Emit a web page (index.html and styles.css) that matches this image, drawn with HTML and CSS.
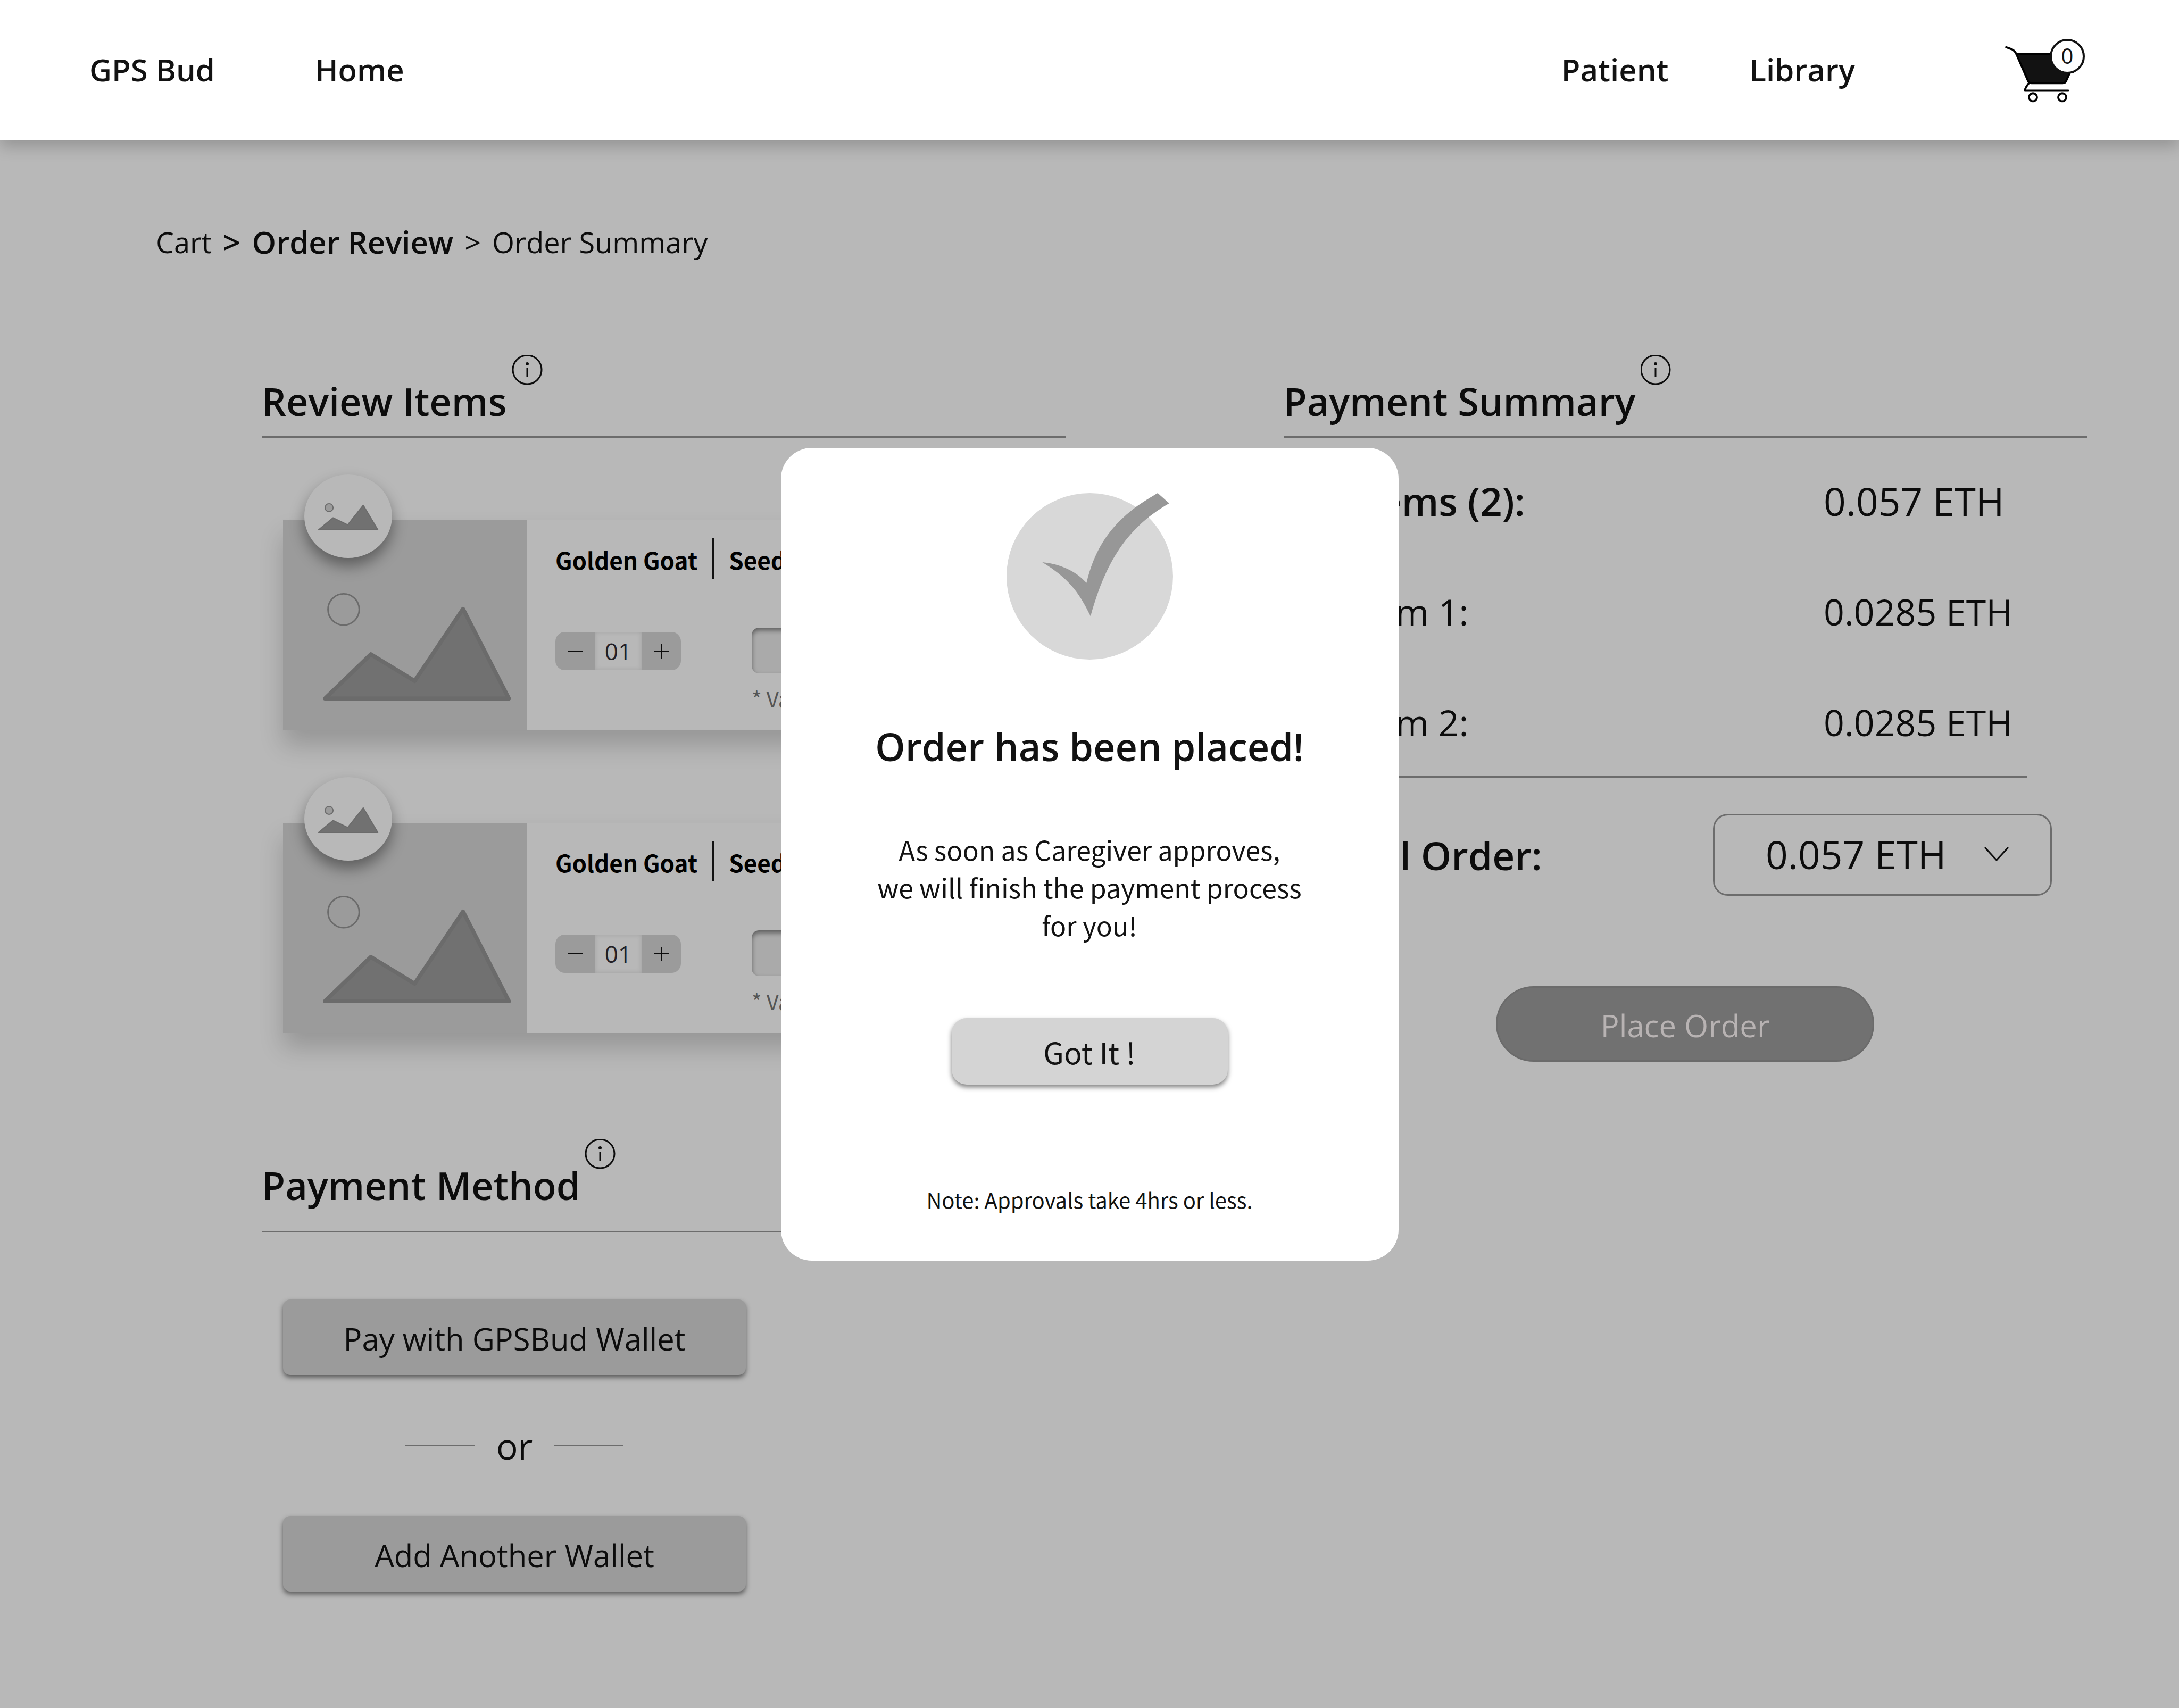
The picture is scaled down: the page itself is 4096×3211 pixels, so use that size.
FILE: index.html
```html
<!DOCTYPE html>
<html lang="en">
<head>
<meta charset="utf-8">
<title>GPS Bud – Order Review</title>
<meta name="viewport" content="width=device-width, initial-scale=1">
<link rel="stylesheet" href="styles.css">
</head>
<body>
<header class="site-header">
  <nav class="nav nav-left" aria-label="Main">
    <a href="#">GPS Bud</a>
    <a href="#">Home</a>
  </nav>
  <nav class="nav nav-right" aria-label="Account">
    <a href="#">Patient</a>
    <a href="#">Library</a>
  </nav>
  <a class="cart" href="#" aria-label="Cart">
    <svg class="cart-icon" viewBox="0 0 240 180" fill="none" stroke="#000" stroke-width="4" stroke-linecap="round" stroke-linejoin="round" aria-hidden="true">
      <path d="M58 57H181L157 110Q155 115 150 115H88Q83 115 81 110Z" fill="#121212"/>
      <path d="M38 44L49 48Q54 50 58 57"/>
      <path d="M83 115C79 120 75 126 75 130H161"/>
      <circle cx="91" cy="143" r="8"/>
      <circle cx="149" cy="143" r="8"/>
    </svg>
    <span class="cart-count">0</span>
  </a>
</header>

<main class="page">
  <nav class="breadcrumb" aria-label="Breadcrumb">
    <a href="#">Cart</a>
    <span class="current">&gt;</span>
    <a href="#" class="current" aria-current="page">Order Review</a>
    <span>&gt;</span>
    <a href="#">Order Summary</a>
  </nav>

  <div class="columns">
    <div class="column">
      <section>
        <div class="section-head">
          <h2>Review Items</h2>
          <button class="info" type="button" aria-label="About review items"><svg viewBox="0 0 57 57" aria-hidden="true"><circle cx="28" cy="28" r="27"/><path d="M28 24V42"/><circle class="dot" cx="28" cy="17" r="3"/></svg></button>
        </div>
        <div class="items">
          <article class="item">
            <div class="photo">
              <svg class="photo-art" viewBox="561 1032 483 417" aria-hidden="true"><circle cx="681" cy="1209" r="31"/><path d="M644 1386L735 1298L822 1351L918 1208L1009 1386Z"/></svg>
              <div class="thumb"><svg class="thumb-art" viewBox="603 941 174 166" aria-hidden="true"><circle cx="652" cy="1007" r="8"/><path d="M631 1051L660 1027L689 1041L720 1002L749 1051Z"/></svg></div>
            </div>
            <div class="item-body">
              <div class="item-title"><h3>Golden Goat</h3><span class="divider"></span><span>Seeds</span></div>
              <div class="item-controls">
                <div class="stepper">
                  <button type="button" aria-label="Decrease quantity"><svg viewBox="0 0 27 27" aria-hidden="true"><path d="M0 13H27"/></svg></button>
                  <input type="text" value="01" aria-label="Quantity">
                  <button type="button" aria-label="Increase quantity"><svg viewBox="0 0 27 27" aria-hidden="true"><path d="M0 13H27M13 0V27"/></svg></button>
                </div>
                <div class="code"><input type="text" id="code-1"><label for="code-1">* Valid code</label></div>
              </div>
            </div>
          </article>
          <article class="item">
            <div class="photo">
              <svg class="photo-art" viewBox="561 1032 483 417" aria-hidden="true"><circle cx="681" cy="1209" r="31"/><path d="M644 1386L735 1298L822 1351L918 1208L1009 1386Z"/></svg>
              <div class="thumb"><svg class="thumb-art" viewBox="603 941 174 166" aria-hidden="true"><circle cx="652" cy="1007" r="8"/><path d="M631 1051L660 1027L689 1041L720 1002L749 1051Z"/></svg></div>
            </div>
            <div class="item-body">
              <div class="item-title"><h3>Golden Goat</h3><span class="divider"></span><span>Seeds</span></div>
              <div class="item-controls">
                <div class="stepper">
                  <button type="button" aria-label="Decrease quantity"><svg viewBox="0 0 27 27" aria-hidden="true"><path d="M0 13H27"/></svg></button>
                  <input type="text" value="01" aria-label="Quantity">
                  <button type="button" aria-label="Increase quantity"><svg viewBox="0 0 27 27" aria-hidden="true"><path d="M0 13H27M13 0V27"/></svg></button>
                </div>
                <div class="code"><input type="text" id="code-2"><label for="code-2">* Valid code</label></div>
              </div>
            </div>
          </article>
        </div>
      </section>

      <section class="method">
        <div class="section-head section-head-tall">
          <h2>Payment Method</h2>
          <button class="info" type="button" aria-label="About payment methods"><svg viewBox="0 0 57 57" aria-hidden="true"><circle cx="28" cy="28" r="27"/><path d="M28 24V42"/><circle class="dot" cx="28" cy="17" r="3"/></svg></button>
        </div>
        <div class="wallets">
          <button class="wallet" type="button">Pay with GPSBud Wallet</button>
          <div class="or"><span>or</span></div>
          <button class="wallet" type="button">Add Another Wallet</button>
        </div>
      </section>
    </div>

    <section class="column">
      <div class="section-head">
        <h2>Payment Summary</h2>
        <button class="info" type="button" aria-label="About the payment summary"><svg viewBox="0 0 57 57" aria-hidden="true"><circle cx="28" cy="28" r="27"/><path d="M28 24V42"/><circle class="dot" cx="28" cy="17" r="3"/></svg></button>
      </div>
      <dl class="amounts">
        <div class="amount amount-main"><dt>Items (2):</dt><dd>0.057 ETH</dd></div>
        <div class="amount"><dt>Item 1:</dt><dd>0.0285 ETH</dd></div>
        <div class="amount"><dt>Item 2:</dt><dd>0.0285 ETH</dd></div>
      </dl>
      <div class="total">
        <label for="total">Total Order:</label>
        <div class="select">
          <select id="total"><option>0.057 ETH</option></select>
          <svg viewBox="0 0 46 27" aria-hidden="true"><path d="M1 1L23 25L45 1"/></svg>
        </div>
      </div>
      <button class="place-order" type="button">Place Order</button>
    </section>
  </div>
</main>

<div class="overlay">
  <div class="modal" role="dialog" aria-modal="true" aria-labelledby="modal-title">
    <svg class="modal-icon" viewBox="1995 978 330 330" aria-hidden="true">
      <circle cx="2160" cy="1143" r="165" fill="#d8d8d8"/>
      <path fill="#979797" d="M2066 1115C2100 1118 2132 1132 2153.500 1156C2172 1078 2212 1024 2294.700 978L2317.500 998.300C2230 1048 2190 1120 2161.600 1222.200C2138 1172 2116 1146 2066 1115Z"/>
    </svg>
    <h1 id="modal-title">Order has been placed!</h1>
    <p class="message">As soon as Caregiver approves,<br>we will finish the payment process<br>for you!</p>
    <button class="confirm" type="button">Got It !</button>
    <p class="note">Note: Approvals take 4hrs or less.</p>
  </div>
</div>
</body>
</html>
```
FILE: styles.css
```css
:root {
  --ink: #0c0c0c;
  --line: #6c6c6c;
  --surface: #b8b8b8;
  --muted: #9b9b9b;
  --brand-font: "Open Sans", "Noto Sans", sans-serif;
  --text-font: "Noto Sans CJK SC", "Noto Sans", sans-serif;
}

* { box-sizing: border-box; }

body {
  margin: 0;
  min-height: 100vh;
  background: var(--surface);
  color: var(--ink);
  font-family: var(--brand-font);
  font-size: 58px;
}

h1, h2, h3, p, dl, dd { margin: 0; }
a { color: inherit; text-decoration: none; }
button, input, select { font: inherit; color: inherit; border: 0; margin: 0; padding: 0; }
svg { display: block; }

/* Header */
.site-header {
  position: relative;
  display: flex;
  align-items: center;
  height: 264px;
  padding: 0 133px 0 168px;
  background: #fff;
  color: #121212;
  box-shadow: 0 11px 28px rgba(0, 0, 0, .2);
}
.nav { display: flex; padding-bottom: 4px; font-size: 58px; font-weight: 600; }
.nav-left { gap: 188px; }
.nav-right { gap: 152px; margin-left: auto; }
.cart { position: relative; margin-left: 248px; }
.cart-icon { width: 228px; height: 171px; }
.cart-count {
  position: absolute;
  left: 118px;
  top: 26px;
  width: 66px;
  height: 66px;
  border: 4px solid #121212;
  border-radius: 50%;
  background: #fff;
  font-size: 40px;
  line-height: 56px;
  text-align: center;
}

/* Page */
.page { padding: 154px 173px 219px 293px; }
.breadcrumb { display: flex; align-items: center; gap: 21px; line-height: 74px; font-size: 54px; }
.breadcrumb .current { font-size: 58px; font-weight: 600; }
.columns {
  display: grid;
  grid-template-columns: 1fr 1fr;
  gap: 410px;
  margin-top: 175px;
  padding-left: 199px;
}
.column { min-width: 0; }

.section-head {
  display: flex;
  align-items: flex-start;
  gap: 10px;
  padding-bottom: 17px;
  border-bottom: 3px solid var(--line);
}
.section-head-tall { padding-bottom: 37px; }
.section-head h2 { margin-top: 38px; font-size: 72px; font-weight: 600; line-height: 98px; }
.info { background: none; }
.info svg { width: 57px; height: 57px; fill: none; stroke: var(--ink); stroke-width: 3; }
.info .dot { fill: var(--ink); stroke: none; }

/* Items */
.items { display: grid; gap: 174px; margin: 155px 40px 0; }
.item {
  display: flex;
  height: 395px;
  background: var(--surface);
  box-shadow: 0 28px 42px rgba(0, 0, 0, .18);
}
.photo { position: relative; flex: none; width: 458px; background: var(--muted); }
.photo-art { width: 458px; height: 395px; fill: #717171; stroke: #6b6b6b; stroke-width: 8; stroke-linejoin: round; }
.photo-art circle { fill: none; stroke-width: 3; }
.thumb {
  position: absolute;
  left: 40px;
  top: -86px;
  width: 165px;
  height: 157px;
  border-radius: 50%;
  background: var(--surface);
  box-shadow: 0 15px 28px rgba(0, 0, 0, .4);
}
.thumb-art { width: 165px; height: 157px; fill: #717171; stroke: #6b6b6b; stroke-width: 2; stroke-linejoin: round; }
.thumb-art circle { fill: var(--muted); }
.item-body { flex: 1; padding: 34px 40px 0 54px; }
.item-title {
  display: flex;
  align-items: center;
  gap: 28px;
  height: 76px;
  color: #000;
  font: 700 44px/64px var(--text-font);
}
.item-title h3 { font: inherit; }
.item-title h3, .item-title span:last-child { padding-top: 4px; }
.divider { width: 3px; height: 76px; background: #121212; }
.item-controls { display: flex; gap: 133px; margin-top: 92px; }
.stepper { display: flex; height: 72px; margin-top: 8px; border-radius: 18px; overflow: hidden; }
.stepper button { display: grid; place-items: center; width: 74px; background: var(--muted); }
.stepper svg { width: 27px; height: 27px; stroke: var(--ink); stroke-width: 2; }
.stepper input {
  width: 88px;
  background: var(--surface);
  box-shadow: inset 0 0 10px rgba(0, 0, 0, .12);
  color: #231f26;
  font-size: 44px;
  text-align: center;
}
.code { display: flex; flex-direction: column; gap: 18px; flex: 1; }
.code input {
  width: 100%;
  height: 86px;
  border-radius: 14px;
  background: #aaa;
  box-shadow: inset 0 5px 10px rgba(0, 0, 0, .45);
}
.code label { color: #555; font: 40px/58px var(--text-font); }

/* Payment method */
.method { margin-top: 199px; }
.wallets { width: 870px; margin: 126px 40px 0; }
.wallet {
  display: block;
  width: 100%;
  height: 142px;
  padding-top: 4px;
  border-radius: 14px;
  background: var(--muted);
  box-shadow: 0 5px 10px rgba(0, 0, 0, .5);
}
.or { display: flex; align-items: center; justify-content: center; gap: 40px; height: 265px; font-size: 68px; }
.or::before, .or::after { content: ""; width: 131px; height: 3px; background: var(--line); }

/* Payment summary */
.amounts {
  display: grid;
  gap: 110px;
  margin-right: 113px;
  padding: 70px 0 52px 129px;
  border-bottom: 3px solid var(--line);
}
.amount { display: grid; grid-template-columns: 1fr 382px; font-size: 68px; line-height: 98px; }
.amount-main { font-size: 73px; }
.amount-main dt { font-weight: 600; }
.total {
  display: flex;
  align-items: center;
  justify-content: space-between;
  margin-top: 68px;
  padding: 0 66px 0 62px;
  font-size: 73px;
}
.total label { font-weight: 600; }
.select { position: relative; width: 637px; }
.select select {
  appearance: none;
  display: block;
  width: 100%;
  height: 154px;
  padding: 0 0 4px 96px;
  border: 3px solid var(--line);
  border-radius: 28px;
  background: var(--surface);
}
.select svg {
  position: absolute;
  right: 81px;
  top: 62px;
  width: 46px;
  height: 27px;
  fill: none;
  stroke: var(--ink);
  stroke-width: 3;
  pointer-events: none;
}
.place-order {
  display: block;
  width: 711px;
  height: 142px;
  margin: 170px auto 0;
  padding-top: 4px;
  border: 3px solid #6b6b6b;
  border-radius: 71px;
  background: #717171;
  color: #b8b3b3;
}

/* Confirmation */
.overlay { position: fixed; inset: 0; display: flex; align-items: center; justify-content: center; }
.modal {
  display: flex;
  flex-direction: column;
  align-items: center;
  width: 1161px;
  padding: 85px 60px 86px;
  border-radius: 58px;
  background: #fff;
  color: #121212;
  text-align: center;
}
.modal-icon { width: 313px; height: 313px; overflow: visible; }
.modal h1 { margin-top: 114px; font-size: 72px; font-weight: 600; line-height: 98px; }
.message { margin-top: 109px; font: 50px/71px var(--text-font); }
.confirm {
  width: 519px;
  height: 125px;
  margin-top: 140px;
  border-radius: 28px;
  background: #d4d4d4;
  box-shadow: 0 5px 10px rgba(0, 0, 0, .5);
  font: 56px var(--text-font);
}
.note { margin-top: 187px; font: 40px/58px var(--text-font); }
```
